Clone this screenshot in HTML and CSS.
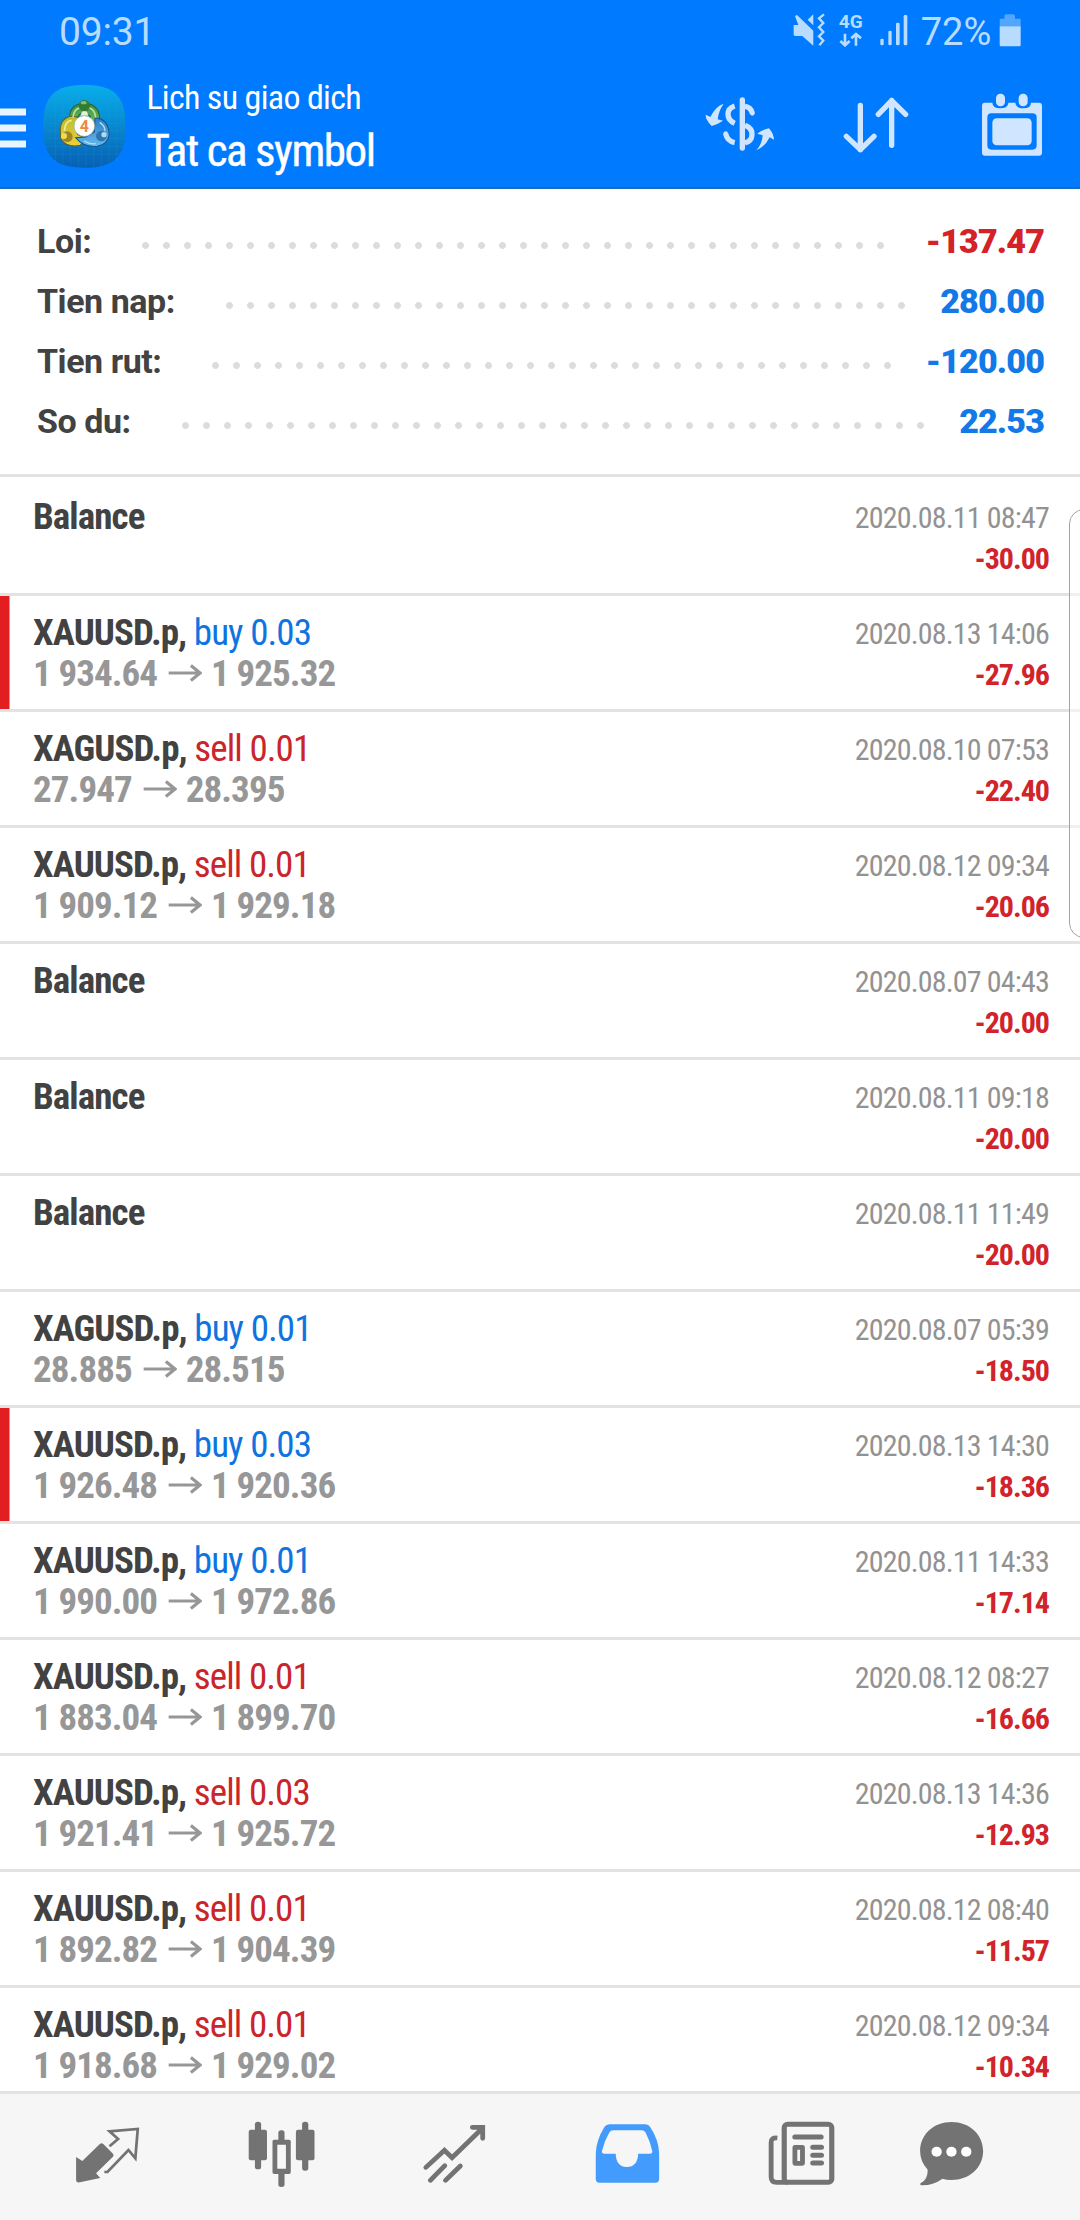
FILE: index.html
```html
<!DOCTYPE html>
<html lang="vi">
<head>
<meta charset="utf-8">
<title>Lich su giao dich</title>
<link rel="stylesheet" href="styles.css">
</head>
<body>
<svg width="0" height="0" class="defs" aria-hidden="true">
  <symbol id="arrow" viewBox="0 0 104 54"><path d="M2 27H98M70 4L98 27L70 50" fill="none" stroke="currentColor" stroke-width="9.5"/></symbol>
</svg>
<div class="screen">
  <header class="top">
    <div class="status">
      <span class="clock">09:31</span>
      <div class="status-icons">
        <svg class="mute" viewBox="338 40 100 102" width="33.3" height="34" fill="currentColor">
          <path d="M340 76H354L344 49L350 46L399 93V138L366 109H343L340 106ZM399 44V77L382 60Z"/>
          <path d="M431 44L416 56L429 70L416 83L429 97L416 110L429 123L417 137" fill="none" stroke="currentColor" stroke-width="7"/>
        </svg>
        <div class="net">
          <span>4G</span>
          <svg viewBox="474 96 70 46" width="23.3" height="15.3" fill="none" stroke="currentColor" stroke-width="8"><path d="M492 101V135M478 123L492 136L506 123M525 137V103M511 115L525 102L540 115"/></svg>
        </div>
        <svg class="signal" viewBox="590 40 90 102" width="30" height="34" fill="currentColor"><rect x="594" y="117" width="10" height="20" rx="4"/><rect x="618" y="93" width="10" height="44" rx="4"/><rect x="641" y="69" width="11" height="68" rx="4"/><rect x="664" y="46" width="11" height="91" rx="4"/></svg>
        <span class="pct">72%</span>
        <svg class="battery" viewBox="958 40 68 102" width="22.7" height="34" fill="currentColor"><path d="M960 57H974V50Q974 44 980 44H1000Q1006 44 1006 50V57H1023V80H960Z" opacity=".45"/><path d="M960 80H1023V136Q1023 140 1019 140H964Q960 140 960 136Z"/></svg>
      </div>
    </div>
    <div class="bar">
      <svg class="menu" viewBox="0 320 80 125" width="26.7" height="41.7"><path d="M0 335H78M0 383H78M0 431H78" stroke="#e6f5ff" stroke-width="21"/></svg>
      <svg class="logo" viewBox="128 254 248 248" width="82.7" height="82.7">
        <defs>
          <linearGradient id="bg" x2="0" y2="1"><stop offset="0" stop-color="#08aeea"/><stop offset=".5" stop-color="#0788cf"/><stop offset="1" stop-color="#0760b4"/></linearGradient>
          <linearGradient id="gr" x2="0" y2="1"><stop offset="0" stop-color="#3c8b3c"/><stop offset="1" stop-color="#7fcc70"/></linearGradient>
          <linearGradient id="ye" x2="0" y2="1"><stop offset="0" stop-color="#b8bd30"/><stop offset="1" stop-color="#f0cf35"/></linearGradient>
          <linearGradient id="bl" x2="0" y2="1"><stop offset="0" stop-color="#2b7fc4"/><stop offset="1" stop-color="#67b9ec"/></linearGradient>
        </defs>
        <path d="M252 254C340 254 376 285 376 378S340 502 252 502S128 471 128 378S164 254 252 254Z" fill="url(#bg)"/>
        <path d="M165 270V486M188 262V494M211 258V498M234 255V501M257 255V501M280 256V500M303 258V498M326 263V493M349 274V482M142 300H362M134 323H370M130 346H374M129 369H375M129 392H375M131 415H373M135 438H369M144 461H360" stroke="#39a7e4" stroke-width="1.5" opacity=".3"/>
        <path d="M208 362Q203 312 252 308Q302 313 298 365L284 388L268 345L240 340L222 362Z" fill="url(#gr)" stroke="#28602c" stroke-width="3"/>
        <path d="M180 400Q176 352 216 347L236 352L222 376L232 402L254 414L240 435Q200 443 182 416Z" fill="url(#ye)" stroke="#685d18" stroke-width="3"/>
        <path d="M284 352Q322 355 326 396Q328 430 290 438Q250 442 226 412L256 410L282 395Z" fill="url(#bl)" stroke="#17528b" stroke-width="3"/>
        <path d="M218 352Q220 326 240 322M286 352Q284 326 264 322" fill="none" stroke="#b5e2a4" stroke-width="5"/>
        <path d="M192 392Q194 362 214 360" fill="none" stroke="#f2ec92" stroke-width="5"/>
        <path d="M298 366Q314 376 314 392M252 422Q268 432 286 430" fill="none" stroke="#b6e0f8" stroke-width="4"/>
        <path d="M245 334Q252 328 260 334L264 346H240Z" fill="#e6f1d8"/>
        <circle cx="252" cy="316" r="17" fill="#327b35"/><ellipse cx="250" cy="307" rx="9" ry="5" fill="#83be77"/>
        <circle cx="201" cy="409" r="16" fill="#a08428"/><circle cx="191" cy="407" r="9" fill="#efdc56"/>
        <circle cx="303" cy="407" r="16" fill="#2d76b0"/><circle cx="311" cy="403" r="8" fill="#aadaf5"/>
        <circle cx="252" cy="377" r="31" fill="#fff" stroke="#9fb7a9" stroke-width="2"/>
        <text x="252" y="394" text-anchor="middle" class="logo-num">4</text>
      </svg>
      <div class="titles">
        <div class="sub">Lich su giao dich</div>
        <div class="main">Tat ca symbol</div>
      </div>
      <div class="actions">
        <svg viewBox="76 280 210 190" width="70" height="63.3" fill="none" stroke="currentColor">
          <path d="M188 301V445" stroke-width="16" stroke-linecap="round"/>
          <path d="M165 319Q145 325 145 344Q145 362 165 371M138 402Q142 424 165 429M196 320Q214 322 218 341M196 377Q218 386 217 405Q216 425 196 430" stroke-width="16"/>
          <circle cx="138" cy="402" r="7" fill="currentColor" stroke="none"/><circle cx="218" cy="341" r="7" fill="currentColor" stroke="none"/>
          <path d="M132 312Q107 320 92 352L78 345Q77 360 96 379Q116 373 130 363L114 359Q116 335 132 312ZM230 452Q248 433 249 407L233 402Q246 391 268 386Q282 402 283 420L270 413Q257 441 230 452Z" fill="currentColor" stroke="none"/>
        </svg>
        <svg viewBox="486 280 204 190" width="68" height="63.3" fill="none" stroke="currentColor" stroke-width="16" stroke-linecap="round" stroke-linejoin="round"><path d="M541 317V450M499 410L541 450L582 410M635 437V302M595 344L635 303L677 344"/></svg>
        <svg viewBox="900 280 192 190" width="64" height="63.3" fill="currentColor">
          <path fill-rule="evenodd" d="M915 309H937Q938 326 961 326T985 309H1006Q1007 326 1030 326T1053 309H1077Q1086 309 1086 318V459Q1086 468 1077 468H915Q906 468 906 459V318Q906 309 915 309ZM934 341Q922 341 922 353V437Q922 450 934 450H1057Q1070 450 1070 437V353Q1070 341 1057 341Z"/>
          <rect x="937" y="356" width="118" height="81" rx="13"/><rect x="948" y="282" width="27" height="38" rx="13"/><rect x="1016" y="282" width="27" height="38" rx="13"/>
        </svg>
      </div>
    </div>
  </header>

  <section class="summary">
    <div class="line"><span>Loi:</span><div class="lead"><i></i></div><b class="red">-137.47</b></div>
    <div class="line"><span>Tien nap:</span><div class="lead"><i></i></div><b class="blue">280.00</b></div>
    <div class="line"><span>Tien rut:</span><div class="lead"><i></i></div><b class="blue">-120.00</b></div>
    <div class="line"><span>So du:</span><div class="lead"><i></i></div><b class="blue">22.53</b></div>
  </section>

  <main class="list">
    <div class="row first"><div class="deal"><div><b>Balance</b></div></div><div class="meta"><div>2020.08.11 08:47</div><b>-30.00</b></div></div>
    <div class="row flagged"><div class="deal"><div><b>XAUUSD.p,</b> <span class="buy">buy 0.03</span></div><div class="price">1 934.64<svg><use href="#arrow"/></svg>1 925.32</div></div><div class="meta"><div>2020.08.13 14:06</div><b>-27.96</b></div></div>
    <div class="row"><div class="deal"><div><b>XAGUSD.p,</b> <span class="sell">sell 0.01</span></div><div class="price">27.947<svg><use href="#arrow"/></svg>28.395</div></div><div class="meta"><div>2020.08.10 07:53</div><b>-22.40</b></div></div>
    <div class="row"><div class="deal"><div><b>XAUUSD.p,</b> <span class="sell">sell 0.01</span></div><div class="price">1 909.12<svg><use href="#arrow"/></svg>1 929.18</div></div><div class="meta"><div>2020.08.12 09:34</div><b>-20.06</b></div></div>
    <div class="row"><div class="deal"><div><b>Balance</b></div></div><div class="meta"><div>2020.08.07 04:43</div><b>-20.00</b></div></div>
    <div class="row"><div class="deal"><div><b>Balance</b></div></div><div class="meta"><div>2020.08.11 09:18</div><b>-20.00</b></div></div>
    <div class="row"><div class="deal"><div><b>Balance</b></div></div><div class="meta"><div>2020.08.11 11:49</div><b>-20.00</b></div></div>
    <div class="row"><div class="deal"><div><b>XAGUSD.p,</b> <span class="buy">buy 0.01</span></div><div class="price">28.885<svg><use href="#arrow"/></svg>28.515</div></div><div class="meta"><div>2020.08.07 05:39</div><b>-18.50</b></div></div>
    <div class="row flagged"><div class="deal"><div><b>XAUUSD.p,</b> <span class="buy">buy 0.03</span></div><div class="price">1 926.48<svg><use href="#arrow"/></svg>1 920.36</div></div><div class="meta"><div>2020.08.13 14:30</div><b>-18.36</b></div></div>
    <div class="row"><div class="deal"><div><b>XAUUSD.p,</b> <span class="buy">buy 0.01</span></div><div class="price">1 990.00<svg><use href="#arrow"/></svg>1 972.86</div></div><div class="meta"><div>2020.08.11 14:33</div><b>-17.14</b></div></div>
    <div class="row"><div class="deal"><div><b>XAUUSD.p,</b> <span class="sell">sell 0.01</span></div><div class="price">1 883.04<svg><use href="#arrow"/></svg>1 899.70</div></div><div class="meta"><div>2020.08.12 08:27</div><b>-16.66</b></div></div>
    <div class="row"><div class="deal"><div><b>XAUUSD.p,</b> <span class="sell">sell 0.03</span></div><div class="price">1 921.41<svg><use href="#arrow"/></svg>1 925.72</div></div><div class="meta"><div>2020.08.13 14:36</div><b>-12.93</b></div></div>
    <div class="row"><div class="deal"><div><b>XAUUSD.p,</b> <span class="sell">sell 0.01</span></div><div class="price">1 892.82<svg><use href="#arrow"/></svg>1 904.39</div></div><div class="meta"><div>2020.08.12 08:40</div><b>-11.57</b></div></div>
    <div class="row"><div class="deal"><div><b>XAUUSD.p,</b> <span class="sell">sell 0.01</span></div><div class="price">1 918.68<svg><use href="#arrow"/></svg>1 929.02</div></div><div class="meta"><div>2020.08.12 09:34</div><b>-10.34</b></div></div>
  </main>

  <nav class="tabs">
    <div class="tab"><svg preserveAspectRatio="none" viewBox="212 115 200 210"><path d="M221 232L239 244L290 193Q295 189 300 193L328 222Q332 227 328 231L279 281L291 295L232 308Q221 310 221 300Z" fill="currentColor"/><path d="M318 200L343 178L318 155L400 148L393 236L373 211L312 277H303" fill="none" stroke="currentColor" stroke-width="8"/></svg></div>
    <div class="tab"><svg preserveAspectRatio="none" viewBox="713 115 200 210" fill="currentColor"><rect x="718" y="150" width="53" height="92" rx="6"/><rect x="736" y="126" width="18" height="143" rx="8"/><rect x="855" y="150" width="54" height="92" rx="6"/><rect x="873" y="126" width="18" height="147" rx="8"/><rect x="804" y="152" width="18" height="40" rx="8"/><rect x="804" y="270" width="18" height="52" rx="8"/><path fill-rule="evenodd" d="M792 180H835Q840 180 840 185V278Q840 283 835 283H792Q787 283 787 278V185Q787 180 792 180ZM801 195V267H826V195Z"/></svg></div>
    <div class="tab"><svg preserveAspectRatio="none" viewBox="1216 115 200 210" fill="none" stroke="currentColor" stroke-width="14" stroke-linecap="round"><path d="M1233 263L1287 212L1309 234L1398 145M1368 143H1398V176M1246 302L1288 258M1290 302L1333 259"/></svg></div>
    <div class="tab active"><svg preserveAspectRatio="none" viewBox="154 115 200 210" fill="currentColor"><path fill-rule="evenodd" d="M202 134H307Q315 134 320 142Q345 180 346 222V298Q346 309 335 309H173Q162 309 162 298V222Q163 182 187 142Q192 134 202 134ZM213 152Q205 152 201 159Q187 183 180 214Q179 222 187 222H220Q221 261 252 262Q284 261 285 222H319Q327 222 326 214Q320 185 307 159Q303 152 295 152Z"/></svg></div>
    <div class="tab"><svg preserveAspectRatio="none" viewBox="660 115 200 210" fill="none" stroke="currentColor"><rect x="710" y="134" width="138" height="174" rx="10" stroke-width="15"/><path d="M690 175Q672 173 672 188V292Q672 308 688 308H720" stroke-width="14"/><path d="M741 172H817M793 203H818M793 227H818M793 250H818" stroke-width="15" stroke-linecap="round"/><rect x="741" y="203" width="22" height="48" stroke-width="14" stroke-linejoin="round"/></svg></div>
    <div class="tab last"><svg preserveAspectRatio="none" viewBox="1093 115 200 210"><path d="M1193 127C1245 127 1285 164 1285 214S1245 301 1193 301Q1177 301 1167 297Q1142 316 1107 317Q1101 317 1103 311Q1125 300 1124 270Q1102 246 1102 214C1102 164 1142 127 1193 127Z" fill="currentColor"/><g fill="#fff"><circle cx="1150" cy="216" r="15"/><circle cx="1193" cy="216" r="15"/><circle cx="1236" cy="216" r="15"/></g></svg></div>
  </nav>
  <div class="edge-panel"></div>
</div>
</body>
</html>
```
FILE: styles.css
```css
* { box-sizing: border-box; }
body { margin: 0; background: #fff; font-family: "Roboto Condensed", Roboto, sans-serif; font-stretch: 75%; }
.defs { position: absolute; }
.screen { position: relative; width: 1080px; height: 2220px; display: flex; flex-direction: column; overflow: hidden; }
svg { display: block; flex: none; }

.top { flex: none; height: 189px; background: #007aff; border-bottom: 2px solid #176bbb; color: #fff; }
.status { display: flex; justify-content: space-between; height: 64px; padding: 0 58px 0 59px; color: #b8dcff; font-family: Roboto, sans-serif; font-stretch: 100%; }
.clock, .pct { font-size: 38px; line-height: 65px; }
.clock { font-size: 39px; letter-spacing: -.2px; }
.status-icons { display: flex; align-items: flex-start; }
.status-icons > svg { margin-top: 13px; }
.net { margin-left: 10px; width: 28px; display: flex; flex-direction: column; align-items: center; padding-top: 13px; }
.net span { font-size: 19px; line-height: 18px; font-weight: 700; }
.net svg { margin-top: 1px; }
.signal { margin-left: 14px; }
.pct { margin-left: 12px; }
.battery { margin-left: 8px; }

.bar { display: flex; height: 123px; }
.menu { margin-top: 43px; }
.logo { margin: 21px 0 0 16px; }
.logo-num { font: 700 48px Roboto, sans-serif; fill: #ee8a3c; }
.titles { margin-left: 21px; padding-top: 12px; }
.sub { font-size: 34px; line-height: 42px; letter-spacing: -.68px; }
.main { font-size: 45px; line-height: 66px; letter-spacing: -1.45px; -webkit-text-stroke: .4px #fff; }
.actions { display: flex; margin-left: auto; padding: 29px 36px 0 0; gap: 67px; color: #d0e5ff; }
.actions svg + svg + svg { margin-left: 3px; }

.summary { flex: none; height: 288px; padding: 22px 37px 0; border-bottom: 3px solid #e3e3e3; font-family: Roboto, sans-serif; font-stretch: 100%; font-size: 34px; font-weight: 700; color: #424242; }
.line { display: flex; height: 60px; line-height: 60px; letter-spacing: -.45px; }
.line b { letter-spacing: -.85px; margin-right: -1px; }
.lead { flex: 1; margin: 0 13px 0 51px; display: flex; }
.lead i { width: round(down, 100%, 21px); background: radial-gradient(circle at 3.5px 34.5px, #dcdcdc 3px, transparent 3.8px) 0 0 / 21px 60px repeat-x; }
.red { color: #d32228; }
.blue { color: #1279e6; }

.list { flex: 1; min-height: 0; overflow: hidden; }
.row { display: flex; justify-content: space-between; height: 116px; padding: 15.5px 31px 0 33px; border-bottom: 3px solid #e3e3e3; }
.row.first { height: 119px; padding-top: 18.5px; }
.flagged { background: linear-gradient(#e31e20, #e31e20) 0 0 / 9.5px 100% no-repeat; }
.deal { font-size: 37px; line-height: 41px; letter-spacing: -.92px; color: #424242; }
.buy { color: #0f74e0; }
.sell { color: #c9252b; }
.price { display: flex; align-items: center; font-weight: 700; color: #979797; }
.price svg { width: 34px; height: 18px; margin: 0 9px 0 11px; }
.meta { padding-top: 1.5px; text-align: right; font-size: 30px; line-height: 41px; letter-spacing: -.82px; color: #929292; }
.meta b { color: #d0242a; letter-spacing: -1px; }

.tabs { flex: none; display: flex; height: 129px; padding-left: 21px; background: #f6f6f6; border-top: 3px solid #e2e2e2; color: #737373; }
.tab { width: 173.4px; display: flex; justify-content: center; padding-top: 24.3px; }
.tab.last { width: 126px; }
.tab svg { width: 68.9px; height: 70px; }
.active { color: #439cfd; }

.edge-panel { position: absolute; left: 1069px; top: 509px; width: 30px; height: 429px; border: 1.5px solid #a3a3a3; border-radius: 16px; background: rgba(255, 255, 255, .45); }
```
